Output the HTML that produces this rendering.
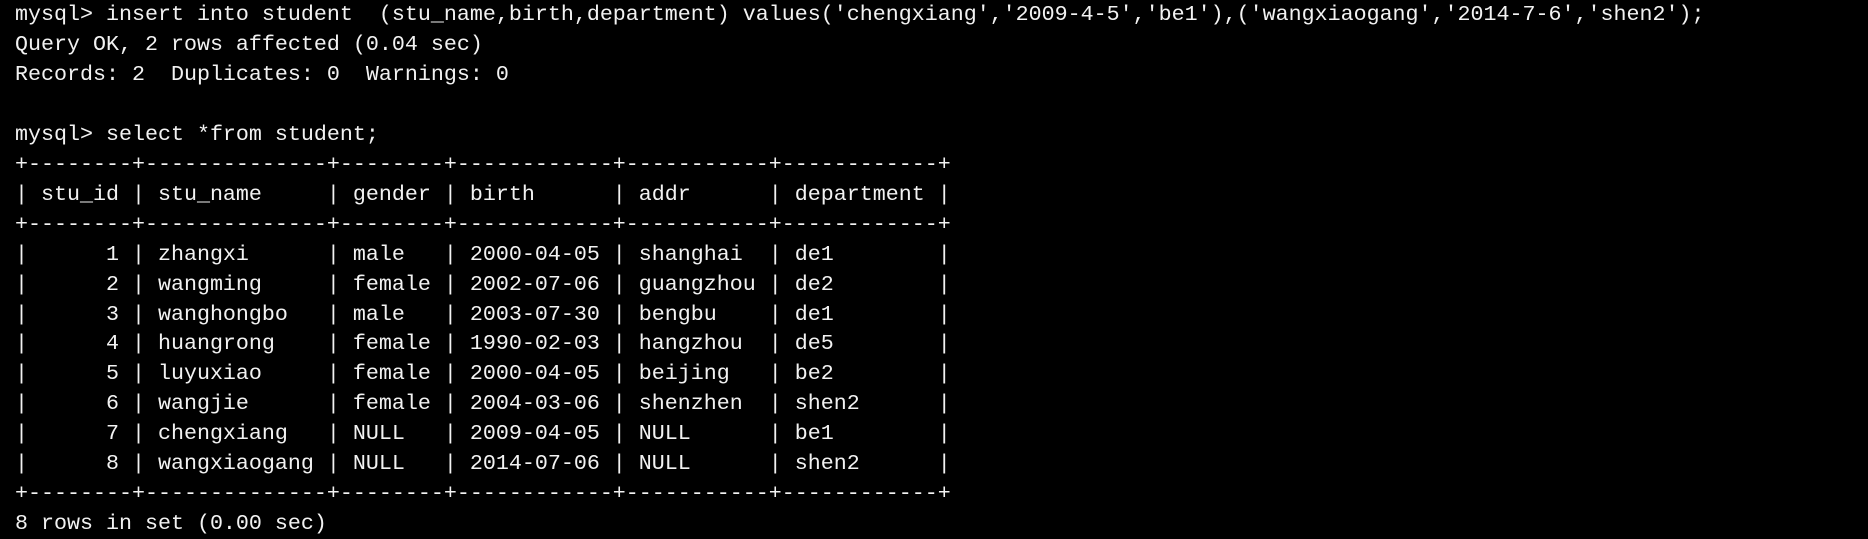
<!DOCTYPE html>
<html><head><meta charset="utf-8"><style>
html,body{margin:0;padding:0;background:#000;width:1868px;height:536px;overflow:hidden}
pre{margin:0;position:absolute;left:15px;top:0;color:#f2f2f2;font-family:"Liberation Mono",monospace;font-size:21.67px;line-height:29.95px;white-space:pre}
</style></head><body><pre>mysql&gt; insert into student  (stu_name,birth,department) values('chengxiang','2009-4-5','be1'),('wangxiaogang','2014-7-6','shen2');
Query OK, 2 rows affected (0.04 sec)
Records: 2  Duplicates: 0  Warnings: 0

mysql&gt; select *from student;
+--------+--------------+--------+------------+-----------+------------+
| stu_id | stu_name     | gender | birth      | addr      | department |
+--------+--------------+--------+------------+-----------+------------+
|      1 | zhangxi      | male   | 2000-04-05 | shanghai  | de1        |
|      2 | wangming     | female | 2002-07-06 | guangzhou | de2        |
|      3 | wanghongbo   | male   | 2003-07-30 | bengbu    | de1        |
|      4 | huangrong    | female | 1990-02-03 | hangzhou  | de5        |
|      5 | luyuxiao     | female | 2000-04-05 | beijing   | be2        |
|      6 | wangjie      | female | 2004-03-06 | shenzhen  | shen2      |
|      7 | chengxiang   | NULL   | 2009-04-05 | NULL      | be1        |
|      8 | wangxiaogang | NULL   | 2014-07-06 | NULL      | shen2      |
+--------+--------------+--------+------------+-----------+------------+
8 rows in set (0.00 sec)</pre></body></html>
